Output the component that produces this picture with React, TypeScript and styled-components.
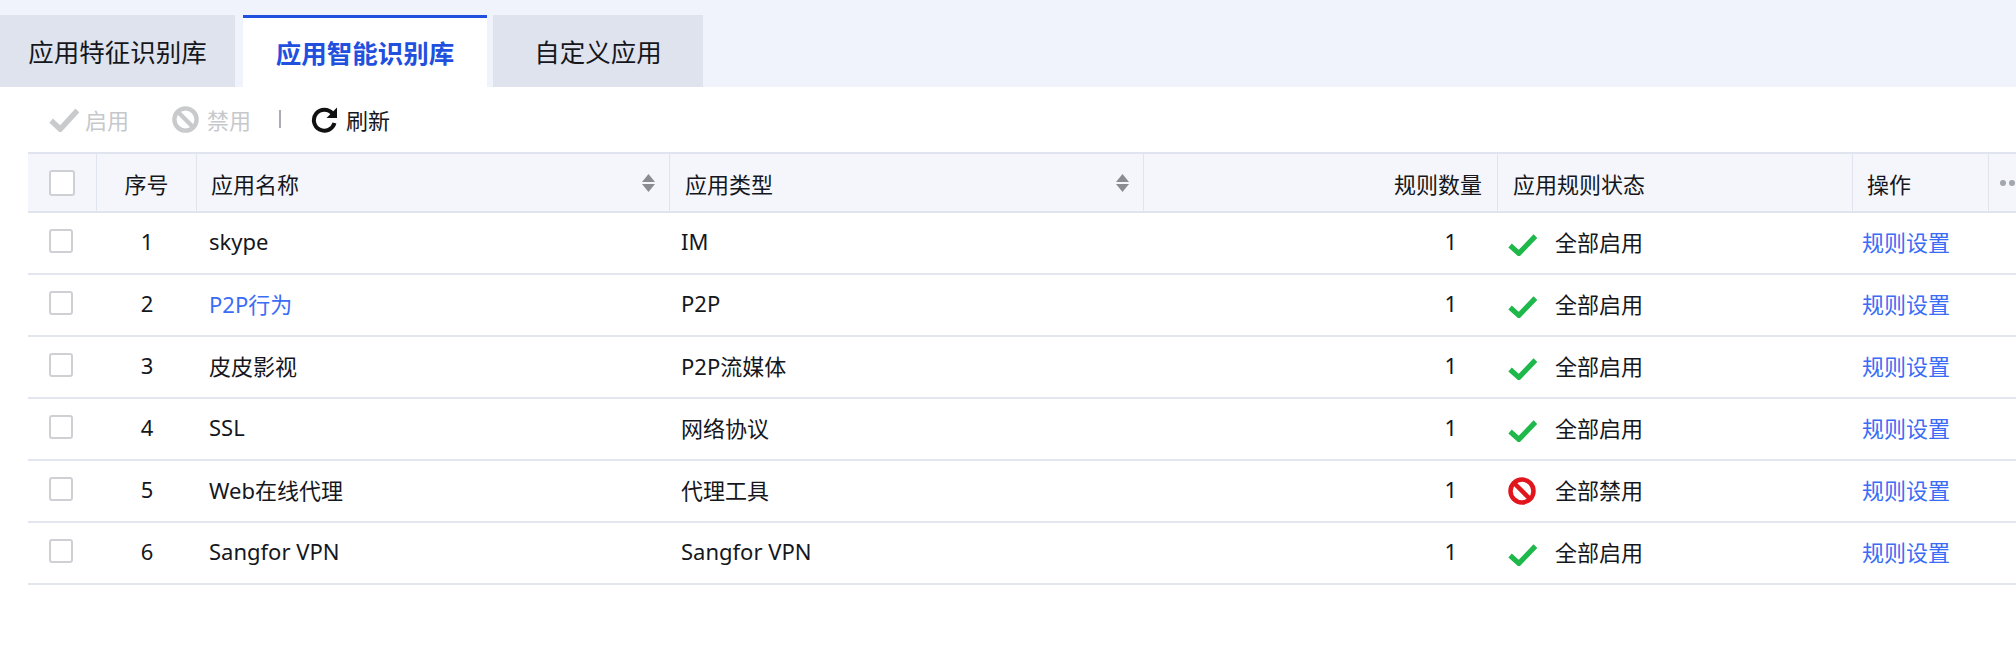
import React from 'react';
import styled, { createGlobalStyle } from 'styled-components';

const Global = createGlobalStyle`
  html, body { margin: 0; padding: 0; background: #fff; }
  body { font-family: "Noto Sans", "Noto Sans CJK SC", sans-serif; color: #15171c; overflow: hidden; }
  * { box-sizing: border-box; }
`;

const Page = styled.div`
  width: 2016px;
  height: 668px;
  background: #fff;
`;
const TabBar = styled.div`
  height: 87px;
  padding-top: 15px;
  background: #f0f3fb;
  display: flex;
`;
const Tab = styled.div<{ $active?: boolean; $w: number; $ml: number }>`
  width: ${p => p.$w}px;
  margin-left: ${p => p.$ml}px;
  display: flex;
  align-items: center;
  justify-content: center;
  font-size: 25.5px;
  padding-bottom: ${p => (p.$active ? 3 : 2)}px;
  font-weight: ${p => (p.$active ? 700 : 400)};
  color: ${p => (p.$active ? '#2150de' : '#15171c')};
  background: ${p => (p.$active ? '#fff' : '#dfe3ee')};
  border-top: ${p => (p.$active ? '3px solid #2150de' : 'none')};
`;
const Toolbar = styled.div`
  height: 65px;
  padding: 0 0 1px 49px;
  display: flex;
  align-items: center;
`;
const ToolButton = styled.div<{ $off?: boolean; $mr: number; $gap: number }>`
  display: flex;
  align-items: center;
  gap: ${p => p.$gap}px;
  margin-right: ${p => p.$mr}px;
  font-size: 22px;
  color: ${p => (p.$off ? '#c6c8cc' : '#15171c')};
`;
const ToolDivider = styled.div`
  width: 2px;
  height: 18px;
  margin-right: 30px;
  background: #a9acb3;
`;
const Table = styled.div`
  margin-left: 28px;
  font-size: 22px;
`;
const columns = '69px 100px 473px 474px 354px 355px 136px 1fr';
const HeadRow = styled.div`
  display: grid;
  grid-template-columns: ${columns};
  height: 61px;
  background: #f4f6fb;
  border-top: 2px solid #e0e4ee;
  border-bottom: 2px solid #e0e4ee;
`;
const HeadCell = styled.div<{ $align?: string; $pl?: number; $pr?: number; $plain?: boolean }>`
  display: flex;
  align-items: center;
  justify-content: ${p => p.$align || 'flex-start'};
  padding-left: ${p => p.$pl || 0}px;
  padding-right: ${p => p.$pr || 0}px;
  border-right: ${p => (p.$plain ? 'none' : '1px solid #e0e4ee')};
  white-space: nowrap;
  overflow: hidden;
  position: relative;
`;
const BodyRow = styled.div`
  display: grid;
  grid-template-columns: ${columns};
  height: 62px;
  border-bottom: 2px solid #e3e6ef;
`;
const Cell = styled.div<{ $align?: string; $pl?: number; $pr?: number }>`
  display: flex;
  align-items: center;
  justify-content: ${p => p.$align || 'flex-start'};
  padding-left: ${p => p.$pl || 0}px;
  padding-right: ${p => p.$pr || 0}px;
  padding-bottom: 4px;
  white-space: nowrap;
`;
const Box = styled.div<{ $size: number }>`
  width: ${p => p.$size}px;
  height: ${p => p.$size}px;
  margin-left: 21px;
  background: #fff;
  border: 2px solid #cfd0d3;
  border-radius: 3px;
`;
const Link = styled.span`
  color: #3a6cf6;
`;
const Status = styled.div`
  display: flex;
  align-items: center;
  gap: 18px;
`;
const StatusMark = styled.span<{ $drop: number }>`
  display: flex;
  width: 29px;
  transform: translateY(${p => p.$drop}px);
`;
const Sort = styled.svg`
  position: absolute;
  right: 14px;
  top: 20px;
`;
const Dots = styled.div`
  display: flex;
  gap: 3px;
  margin-left: 11px;
`;
const Dot = styled.span`
  width: 6px;
  height: 6px;
  flex: none;
  border-radius: 50%;
  background: #a3a6ad;
`;

const Check = ({ color, size = 29, h = 23 }: { color: string; size?: number; h?: number }) => (
  <svg width={size} height={h} viewBox="0 0 28 22" fill="none" preserveAspectRatio="none">
    <path d="M2 12 L10.5 19.5 L26.5 3" stroke={color} strokeWidth="5" />
  </svg>
);
const Ban = ({ color, size = 28 }: { color: string; size?: number }) => (
  <svg width={size} height={size} viewBox="0 0 28 28" fill="none">
    <circle cx="14" cy="14" r="11.5" stroke={color} strokeWidth="4.5" />
    <path d="M6 6 L22 22" stroke={color} strokeWidth="4.5" />
  </svg>
);
const Refresh = () => (
  <svg width="27" height="27" viewBox="0 0 27 27" fill="none">
    <path d="M21.5 7.5 A10.5 10.5 0 1 0 23.5 17" stroke="#111" strokeWidth="4" />
    <path d="M26 1.5 V12 H15.5 Z" fill="#111" />
  </svg>
);
const SortIcon = () => (
  <Sort width="13" height="18" viewBox="0 0 14 20" preserveAspectRatio="none">
    <path d="M7 0 L14 9 H0 Z" fill="#8a8c91" />
    <path d="M7 20 L14 11 H0 Z" fill="#8a8c91" />
  </Sort>
);

const rows = [
  { n: 1, name: 'skype', type: 'IM', on: true },
  { n: 2, name: 'P2P行为', type: 'P2P', on: true, link: true },
  { n: 3, name: '皮皮影视', type: 'P2P流媒体', on: true },
  { n: 4, name: 'SSL', type: '网络协议', on: true },
  { n: 5, name: 'Web在线代理', type: '代理工具', on: false },
  { n: 6, name: 'Sangfor VPN', type: 'Sangfor VPN', on: true },
];

export default function App() {
  return (
    <Page>
      <Global />
      <TabBar>
        <Tab $w={235} $ml={0}>应用特征识别库</Tab>
        <Tab $w={244} $ml={8} $active>应用智能识别库</Tab>
        <Tab $w={210} $ml={6}>自定义应用</Tab>
      </TabBar>
      <Toolbar>
        <ToolButton $off $mr={43} $gap={6}><Check color="#c9cacc" size={30} h={25} />启用</ToolButton>
        <ToolButton $off $mr={28} $gap={8}><Ban color="#c9cacc" size={27} />禁用</ToolButton>
        <ToolDivider />
        <ToolButton $mr={0} $gap={8}><Refresh />刷新</ToolButton>
      </Toolbar>
      <Table>
        <HeadRow>
          <HeadCell><Box $size={26} /></HeadCell>
          <HeadCell $align="center">序号</HeadCell>
          <HeadCell $pl={14}>应用名称<SortIcon /></HeadCell>
          <HeadCell $pl={15}>应用类型<SortIcon /></HeadCell>
          <HeadCell $align="flex-end" $pr={15}>规则数量</HeadCell>
          <HeadCell $pl={15}>应用规则状态</HeadCell>
          <HeadCell $pl={14}>操作</HeadCell>
          <HeadCell $plain><Dots><Dot /><Dot /><Dot /></Dots></HeadCell>
        </HeadRow>
        {rows.map(r => (
          <BodyRow key={r.n}>
            <Cell><Box $size={24} /></Cell>
            <Cell $align="center">{r.n}</Cell>
            <Cell $pl={12}>{r.link ? <Link>{r.name}</Link> : r.name}</Cell>
            <Cell $pl={11}>{r.type}</Cell>
            <Cell $align="flex-end" $pr={41}>1</Cell>
            <Cell $pl={10}>
              <Status>
                <StatusMark $drop={r.on ? 3 : 2}>
                  {r.on ? <Check color="#1fb84a" /> : <Ban color="#e0161c" />}
                </StatusMark>
                {r.on ? '全部启用' : '全部禁用'}
              </Status>
            </Cell>
            <Cell $pl={9}><Link>规则设置</Link></Cell>
            <Cell />
          </BodyRow>
        ))}
      </Table>
    </Page>
  );
}
